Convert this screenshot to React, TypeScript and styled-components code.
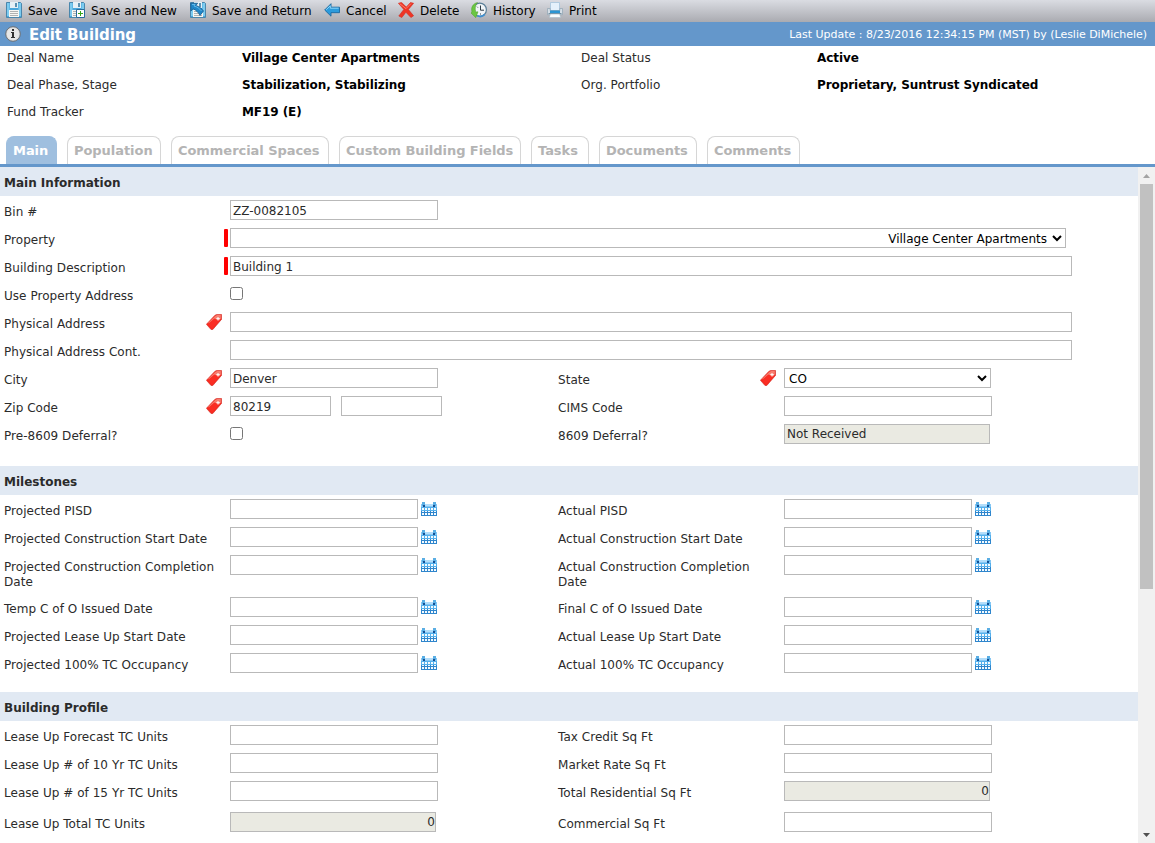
import { ReactNode } from 'react';
import styled, { createGlobalStyle } from 'styled-components';

type FieldType = 'text' | 'wide' | 'zip' | 'date' | 'select' | 'wideSelect' | 'check' | 'readonly' | 'total';

interface FieldData {
  label: string;
  type: FieldType;
  value?: string;
  marker?: 'bar' | 'tag';
}

interface RowData {
  left: FieldData;
  right?: FieldData;
  height?: number;
}

interface SectionData {
  title: string;
  gap: number;
  rows: RowData[];
}

const tabs = [
  { title: 'Main', width: 51 },
  { title: 'Population', width: 94 },
  { title: 'Commercial Spaces', width: 158 },
  { title: 'Custom Building Fields', width: 182 },
  { title: 'Tasks', width: 58 },
  { title: 'Documents', width: 98 },
  { title: 'Comments', width: 93 },
];

const sections: SectionData[] = [
  {
    title: 'Main Information',
    gap: 18,
    rows: [
      { left: { label: 'Bin #', type: 'text', value: 'ZZ-0082105' } },
      { left: { label: 'Property', type: 'wideSelect', value: 'Village Center Apartments', marker: 'bar' } },
      { left: { label: 'Building Description', type: 'wide', value: 'Building 1', marker: 'bar' } },
      { left: { label: 'Use Property Address', type: 'check' } },
      { left: { label: 'Physical Address', type: 'wide', marker: 'tag' } },
      { left: { label: 'Physical Address Cont.', type: 'wide' } },
      {
        left: { label: 'City', type: 'text', value: 'Denver', marker: 'tag' },
        right: { label: 'State', type: 'select', value: 'CO', marker: 'tag' },
      },
      {
        left: { label: 'Zip Code', type: 'zip', value: '80219', marker: 'tag' },
        right: { label: 'CIMS Code', type: 'text' },
      },
      {
        left: { label: 'Pre-8609 Deferral?', type: 'check' },
        right: { label: '8609 Deferral?', type: 'readonly', value: 'Not Received' },
      },
    ],
  },
  {
    title: 'Milestones',
    gap: 15,
    rows: [
      { left: { label: 'Projected PISD', type: 'date' }, right: { label: 'Actual PISD', type: 'date' } },
      {
        left: { label: 'Projected Construction Start Date', type: 'date' },
        right: { label: 'Actual Construction Start Date', type: 'date' },
      },
      {
        left: { label: 'Projected Construction Completion Date', type: 'date' },
        right: { label: 'Actual Construction Completion Date', type: 'date' },
        height: 42,
      },
      {
        left: { label: 'Temp C of O Issued Date', type: 'date' },
        right: { label: 'Final C of O Issued Date', type: 'date' },
      },
      {
        left: { label: 'Projected Lease Up Start Date', type: 'date' },
        right: { label: 'Actual Lease Up Start Date', type: 'date' },
      },
      {
        left: { label: 'Projected 100% TC Occupancy', type: 'date' },
        right: { label: 'Actual 100% TC Occupancy', type: 'date' },
      },
    ],
  },
  {
    title: 'Building Profile',
    gap: 0,
    rows: [
      { left: { label: 'Lease Up Forecast TC Units', type: 'text' }, right: { label: 'Tax Credit Sq Ft', type: 'text' } },
      { left: { label: 'Lease Up # of 10 Yr TC Units', type: 'text' }, right: { label: 'Market Rate Sq Ft', type: 'text' } },
      {
        left: { label: 'Lease Up # of 15 Yr TC Units', type: 'text' },
        right: { label: 'Total Residential Sq Ft', type: 'total', value: '0' },
        height: 31,
      },
      {
        left: { label: 'Lease Up Total TC Units', type: 'total', value: '0' },
        right: { label: 'Commercial Sq Ft', type: 'text' },
      },
    ],
  },
];

const Floppy = () => (
  <>
    <path d="M.5.5h14l1 1v14H.5z" fill="#4ba6da" stroke="#4a86ac" />
    <path d="M1 1h2.500v13H1zM12.500 1H15v13h-2.500z" fill="#7ccbf0" />
    <path d="M4 0h8v6H4z" fill="#e6f0f6" />
    <path d="M9 1h2v4H9z" fill="#5b91b2" />
    <path d="M3 8h10v7H3z" fill="#f7f7f4" />
    <path d="M4 9.5h8M4 11.5h8M4 13.5h8" stroke="#b0b2b2" />
  </>
);

const SaveIcon = () => (
  <Icon viewBox="0 0 16 16">
    <Floppy />
  </Icon>
);

const SaveNewIcon = () => (
  <Icon viewBox="0 0 16 16">
    <Floppy />
    <path d="M7.5 7.5h8v8h-8z" fill="#fff" stroke="#2b6c9c" />
    <path d="M11.5 9v5M9 11.5h5" stroke="#36a51a" />
  </Icon>
);

const SaveReturnIcon = () => (
  <Icon viewBox="0 0 16 16">
    <Floppy />
    <path d="M.7 1.300h7L5.800 3.500c3.500 1 6 3 7.700 5.500L10 13.500C8.500 10.500 6 8 3.200 6.800L.9 9z" fill="#1f86c8" stroke="#1b5c8e" strokeWidth=".8" />
    <path d="M2 2.500h3L4 4c3 .8 5.500 2.500 7.500 5" stroke="#5cb8ea" fill="none" />
  </Icon>
);

const CancelIcon = () => (
  <Icon viewBox="0 0 16 16">
    <path d="M.7 8L7 1.700v3.500h8.500v5.500H7v3.500z" fill="#2c9bdc" stroke="#1b689f" strokeWidth=".9" />
    <path d="M2.200 7.700L6.300 3.800v2.400h8.300" fill="none" stroke="#8bd6fa" />
  </Icon>
);

const DeleteIcon = () => (
  <Icon viewBox="0 0 16 16">
    <path
      d="M.4 1.300L3.500.4l4.800 4.700L12.500.5l3.100.8-5.200 6.200 5.200 6.300-2.700 1.700-5-5.200-4.100 5.200L.8 14l5-6.600z"
      fill="#ef3525"
      stroke="#d02a20"
      strokeWidth=".6"
    />
    <path d="M1.700 1.600l6.300 5L13 1.600" fill="none" stroke="#ff8472" strokeWidth=".9" />
  </Icon>
);

const HistoryIcon = () => (
  <Icon viewBox="0 0 16 16">
    <circle cx="8.800" cy="7.700" r="6.600" fill="#f1f5f8" stroke="#5b7f98" strokeWidth="1.200" />
    <path d="M13.800 12.300a6.600 6.600 0 0 1-7.500 1.500" fill="none" stroke="#3f8fd0" strokeWidth="1.800" />
    <path d="M9.500 3.500v4.700H13M9.500 11.500v1M6 4.700l.8.8" stroke="#2d3b45" fill="none" />
    <path d="M6.500.5C2 1.500-.3 5.500 1 10L-.2 10.800 4.800 15.700 7 9.800l-2.200.3C3.700 6.500 4.200 3 6.500.5z" fill="#6cc643" stroke="#47a02a" strokeWidth=".5" />
  </Icon>
);

const PrintIcon = () => (
  <Icon viewBox="0 0 16 16">
    <path d="M3.500.5h9v8h-9z" fill="#e4f1fb" stroke="#a5c4dc" strokeWidth=".8" />
    <path d="M.5 6.500h2.700v2h9.600v-2h2.700v6.200H.5z" fill="#d5dfe7" stroke="#8fa4b2" strokeWidth=".7" />
    <path d="M3 8.500h10v3H3z" fill="#2b95d3" />
    <path d="M1.500 11.500h13" stroke="#5d7c91" strokeWidth=".8" />
    <path d="M3.300 12h9.400l1 3.500H2.300z" fill="#fafcfd" stroke="#a4bac8" strokeWidth=".6" />
  </Icon>
);

const InfoIcon = () => (
  <Icon viewBox="0 0 16 16">
    <circle cx="8" cy="8" r="7.3" fill="#dedede" stroke="#6b6f74" strokeWidth="1" />
    <circle cx="8" cy="8" r="6" fill="#e7e7e7" />
    <path d="M7 3h2v2H7zM6 6h3v5h1v1H6v-1h1V7H6z" fill="#303030" />
  </Icon>
);

const TagIcon = () => (
  <Icon viewBox="0 0 16 16">
    <path d="M.4 10.300L9 1.200l2-.8h4.500v5L6.800 15.500H5z" fill="#f9291f" stroke="#cf2a22" strokeWidth=".6" />
    <path d="M1.500 9.500L9.500 1.700l1.700-.6h3.600v3.500L12.500 7z" fill="#f77f70" />
    <path d="M1.500 10.200L8.300 4.500l5 2-7 8z" fill="#fa2e24" />
    <path d="M12 3v3.500M10.300 4.700h3.500" stroke="#fff" strokeWidth="1" />
  </Icon>
);

const CalendarIcon = () => (
  <Icon viewBox="0 0 16 16">
    <path d="M0 3h16v4H0z" fill="#86c8f5" />
    <path d="M0 6h16v4H0z" fill="#55b0ec" />
    <path d="M0 10h16v5H0z" fill="#2f86cd" />
    <path d="M3 3h10v2H3z" fill="#b3defb" />
    <path d="M1 1h3v4H1zM12 1h3v4h-3z" fill="#5aaee4" />
    <path d="M2 4h2v2H2zM12 4h2v2h-2z" fill="#124f94" />
    <path
      d="M1 7h2v2H1zM4 7h2v2H4zM7 7h2v2H7zM10 7h2v2h-2zM13 7h2v2h-2zM1 10h2v1H1zM4 10h2v1H4zM7 10h2v1H7zM10 10h2v1h-2zM13 10h2v1h-2zM1 12h2v2H1zM4 12h2v2H4zM7 12h2v2H7zM10 12h2v2h-2zM13 12h2v2h-2z"
      fill="#f5fbff"
    />
  </Icon>
);

const actions: { title: string; icon: ReactNode; width: number }[] = [
  { title: 'Save', icon: <SaveIcon />, width: 63 },
  { title: 'Save and New', icon: <SaveNewIcon />, width: 121 },
  { title: 'Save and Return', icon: <SaveReturnIcon />, width: 134 },
  { title: 'Cancel', icon: <CancelIcon />, width: 74 },
  { title: 'Delete', icon: <DeleteIcon />, width: 73 },
  { title: 'History', icon: <HistoryIcon />, width: 76 },
  { title: 'Print', icon: <PrintIcon />, width: 60 },
];

function Control({ type, value, label }: FieldData) {
  switch (type) {
    case 'wide':
      return <Input $width={842} defaultValue={value} aria-label={label} />;
    case 'zip':
      return (
        <>
          <Input $width={101} defaultValue={value} aria-label={label} />
          <Input $width={101} $offset={10} aria-label={label} />
        </>
      );
    case 'date':
      return (
        <>
          <Input $width={188} aria-label={label} />
          <CalendarButton aria-label={label}>
            <CalendarIcon />
          </CalendarButton>
        </>
      );
    case 'select':
      return (
        <Select $width={207} aria-label={label}>
          <option>{value}</option>
        </Select>
      );
    case 'wideSelect':
      return (
        <Select $width={836} $right aria-label={label}>
          <option>{value}</option>
        </Select>
      );
    case 'check':
      return <Checkbox type="checkbox" aria-label={label} />;
    case 'readonly':
      return <ReadOnly>{value}</ReadOnly>;
    case 'total':
      return <ReadOnly $right>{value}</ReadOnly>;
    default:
      return <Input $width={208} defaultValue={value} aria-label={label} />;
  }
}

function Field(props: FieldData) {
  return (
    <>
      <LabelCell>
        <Label>{props.label}</Label>
        {props.marker === 'bar' && <RequiredBar />}
        {props.marker === 'tag' && (
          <TagMarker>
            <TagIcon />
          </TagMarker>
        )}
      </LabelCell>
      <ControlCell>
        <Control {...props} />
      </ControlCell>
    </>
  );
}

function App() {
  return (
    <Page>
      <GlobalStyle />
      <Toolbar>
        {actions.map(({ title, icon, width }) => (
          <Action key={title} $width={width}>
            {icon}
            <span>{title}</span>
          </Action>
        ))}
      </Toolbar>
      <TitleBar>
        <InfoIcon />
        <Title>Edit Building</Title>
        <LastUpdate>Last Update : 8/23/2016 12:34:15 PM (MST) by (Leslie DiMichele)</LastUpdate>
      </TitleBar>
      <Summary>
        <span>Deal Name</span>
        <b>Village Center Apartments</b>
        <span>Deal Status</span>
        <b>Active</b>
        <span>Deal Phase, Stage</span>
        <b>Stabilization, Stabilizing</b>
        <span>Org. Portfolio</span>
        <b>Proprietary, Suntrust Syndicated</b>
        <span>Fund Tracker</span>
        <b>MF19 (E)</b>
      </Summary>
      <Tabs>
        {tabs.map(({ title, width }, index) => (
          <Tab key={title} $width={width} $active={index === 0}>
            {title}
          </Tab>
        ))}
      </Tabs>
      <Body>
        <Form>
          {sections.map(({ title, gap, rows }) => (
            <Section key={title} $gap={gap}>
              <SectionTitle>{title}</SectionTitle>
              {rows.map(({ left, right, height }) => (
                <Row key={left.label} $height={height}>
                  <Field {...left} />
                  {right && <Field {...right} />}
                </Row>
              ))}
            </Section>
          ))}
        </Form>
        <Scrollbar>
          <Arrow viewBox="0 0 17 17">
            <path d="M5 11h7L8.5 7z" fill="#a3a3a3" />
          </Arrow>
          <Thumb />
          <Arrow viewBox="0 0 17 17">
            <path d="M5 7h7l-3.500 4z" fill="#505050" />
          </Arrow>
        </Scrollbar>
      </Body>
    </Page>
  );
}

export default App;

const GlobalStyle = createGlobalStyle`
  * {
    box-sizing: border-box;
  }

  body {
    margin: 0;
    overflow: hidden;
    background: #fff;
  }

  body, input, select, button {
    font-family: Verdana, 'DejaVu Sans', sans-serif;
    font-size: 12px;
    color: #2b2b2b;
  }
`;

const Page = styled.div`
  display: flex;
  flex-direction: column;
  height: 843px;
  width: 1155px;
`;

const Icon = styled.svg`
  display: block;
  flex: none;
  width: 16px;
  height: 16px;
`;

const Toolbar = styled.div`
  display: flex;
  align-items: center;
  height: 22px;
  padding: 0 0 2px 6px;
  background: linear-gradient(#dadce2, #aaabb1);
`;

const Action = styled.div<{ $width: number }>`
  display: flex;
  align-items: center;
  gap: 6px;
  width: ${({ $width }) => $width}px;
  color: #000;
  white-space: nowrap;

  span {
    padding-top: 2px;
  }
`;

const TitleBar = styled.div`
  display: flex;
  align-items: center;
  height: 24px;
  padding: 0 8px 0 5px;
  background: #6497cb;
  color: #fff;
`;

const Title = styled.h1`
  margin: 1px 0 0 8px;
  font-size: 15px;
  letter-spacing: -0.1px;
  white-space: nowrap;
`;

const LastUpdate = styled.span`
  margin-left: auto;
  font-size: 11px;
  letter-spacing: -0.015px;
  white-space: nowrap;
`;

const Summary = styled.div`
  display: grid;
  grid-template-columns: 235px 339px 236px 1fr;
  grid-auto-rows: 27px;
  align-items: center;
  height: 90px;
  padding-left: 7px;
  margin-top: -2px;
  white-space: nowrap;

  span {
    letter-spacing: 0.04px;
  }

  b {
    color: #000;
    letter-spacing: -0.07px;
  }
`;

const Tabs = styled.div`
  display: flex;
  align-items: flex-end;
  gap: 10px;
  height: 33px;
  padding-left: 6px;
  border-bottom: 3px solid #6497cb;
`;

const Tab = styled.div<{ $width: number; $active: boolean }>`
  display: flex;
  align-items: center;
  padding-left: 6px;
  width: ${({ $width }) => $width}px;
  height: 28px;
  border: 1px solid ${({ $active }) => ($active ? '#9fbfdf' : '#d6d6d6')};
  border-bottom: 0;
  border-radius: 8px 8px 0 0;
  background: ${({ $active }) => ($active ? '#9fbfdf' : '#fff')};
  color: ${({ $active }) => ($active ? '#fff' : '#b4b4b4')};
  font-size: 13px;
  font-weight: bold;
  letter-spacing: -0.05px;
  white-space: nowrap;
`;

const Body = styled.div`
  display: flex;
  flex: 1;
  min-height: 0;
`;

const Form = styled.div`
  flex: 1;
  overflow: hidden;
`;

const Section = styled.section<{ $gap: number }>`
  margin-bottom: ${({ $gap }) => $gap}px;
`;

const SectionTitle = styled.h2`
  height: 29px;
  margin: 0;
  padding: 1px 0 0 4px;
  background: #e1e9f3;
  font-size: 12px;
  line-height: 30px;
`;

const Row = styled.div<{ $height?: number }>`
  display: grid;
  grid-template-columns: 230px 324px 230px 1fr;
  height: ${({ $height = 28 }) => $height}px;
`;

const LabelCell = styled.div`
  display: flex;
  justify-content: space-between;
  padding-left: 4px;
`;

const Label = styled.label`
  max-width: 215px;
  padding-top: 9px;
  letter-spacing: 0.04px;
  line-height: 15px;
`;

const RequiredBar = styled.span`
  width: 4px;
  height: 18px;
  margin: 5px 2px 0 0;
  border-radius: 1px;
  background: #f00;
`;

const TagMarker = styled.span`
  margin: 6px 8px 0 0;
`;

const ControlCell = styled.div`
  display: flex;
  align-items: flex-start;
  padding-top: 4px;
`;

const Input = styled.input<{ $width: number; $offset?: number }>`
  flex: none;
  width: ${({ $width }) => $width}px;
  height: 20px;
  margin: 0 0 0 ${({ $offset = 0 }) => $offset}px;
  padding: 1px 2px 0;
  border: 1px solid #b9b9b9;
  background: #fff;
`;

const Select = styled.select<{ $width: number; $right?: boolean }>`
  flex: none;
  width: ${({ $width }) => $width}px;
  height: 20px;
  margin: 0;
  padding: ${({ $right }) => ($right ? '1px 2px 0 0' : '1px 0 0')};
  border: 1px solid #b9b9b9;
  border-radius: 0;
  background: #fff;
  color: #000;
  text-align-last: ${({ $right }) => ($right ? 'right' : 'left')};
`;

const Checkbox = styled.input`
  width: 13px;
  height: 13px;
  margin: 3px 0 0;
`;

const ReadOnly = styled.div<{ $right?: boolean }>`
  width: 206px;
  height: 20px;
  padding: 0 ${({ $right }) => ($right ? 0 : 2)}px;
  border: 1px solid #b9b9b9;
  background: #eaeae2;
  line-height: 18px;
  text-align: ${({ $right }) => ($right ? 'right' : 'left')};
`;

const CalendarButton = styled.button`
  margin: 2px 0 0 3px;
  padding: 0;
  border: 0;
  background: none;
`;

const Scrollbar = styled.div`
  display: flex;
  flex-direction: column;
  width: 17px;
  background: #f1f1f1;
`;

const Arrow = styled.svg`
  display: block;
  flex: none;
  width: 17px;
  height: 17px;
`;

const Thumb = styled.div`
  height: 405px;
  margin: 0 2px auto;
  background: #c1c1c1;
`;
